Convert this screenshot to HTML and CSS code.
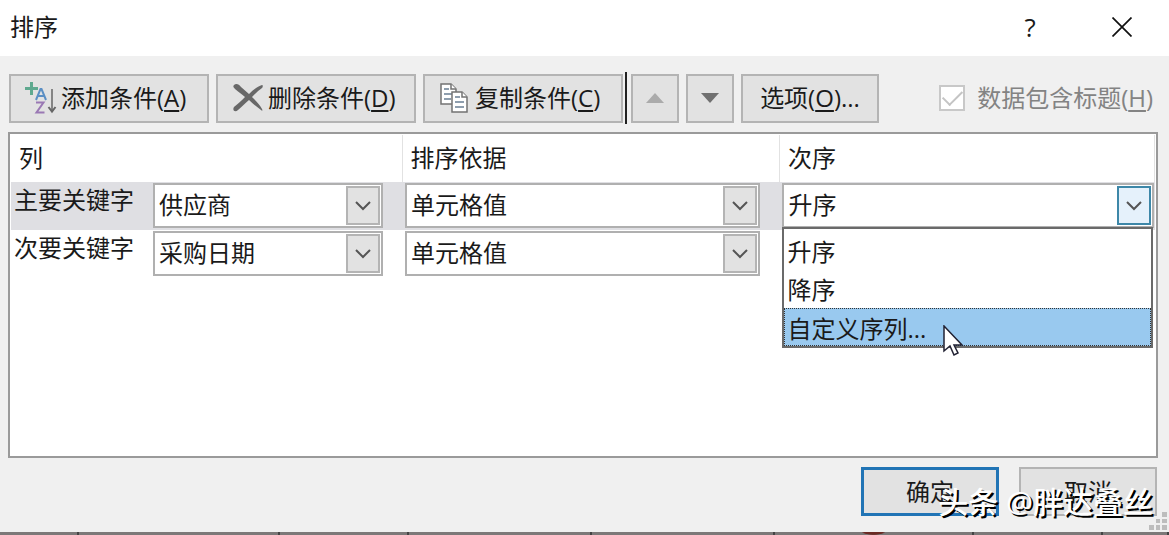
FILE: index.html
```
<!DOCTYPE html>
<html lang="zh-CN">
<head>
  <meta charset="UTF-8" />
  <meta name="viewport" content="width=device-width, initial-scale=1.0"/>
  <title>排序</title>
  <link rel="stylesheet" href="styles.css">
</head>
<body>

  <main class="dialog">
    <header class="titlebar">
      <h1>排序</h1>
      <button type="button" class="title-btn help" aria-label="帮助">?</button>
      <button type="button" class="title-btn" aria-label="关闭">
        <svg width="20" height="20" viewBox="0 0 20 20"><path d="M0.5 0.5L19.5 19.5M19.5 0.5L0.5 19.5" stroke="#111" stroke-width="1.700" fill="none"/></svg>
      </button>
    </header>

    <div class="toolbar">
      <button type="button" class="btn tool">
        <svg width="32" height="32" viewBox="0 0 32 32" fill="none">
          <path d="M6.500 0V13M0 6.500H13" stroke="#5fa98f" stroke-width="3"/>
          <path d="M11 18L15.500 7H16.500L21 18M12.500 14H19.500" stroke="#5b8fc4" stroke-width="2"/>
          <path d="M11 20.500H18.500L11.500 30.500H19.500" stroke="#9a78b4" stroke-width="2"/>
          <path d="M27 7V29" stroke="#666" stroke-width="1.500"/>
          <path d="M23.500 25L27 29.500L30.500 25" stroke="#666" stroke-width="2"/>
        </svg>
        <span>添加条件(<u>A</u>)</span>
      </button>
      <button type="button" class="btn tool">
        <svg width="32" height="32" viewBox="0 0 32 32">
          <path d="M2 3C4 1 7 2 9 5L17 12C21 8 26 4 30 3C31 3 31 5 30 6C27 8 23 12 20 15C24 19 28 23 30 27C31 29 30 29 29 28C25 25 21 22 17 18C13 21 10 25 6 28C3 31 0 28 2 25C6 22 10 18 13 15C10 12 6 10 3 7C1 5 1 4 2 3Z" fill="#686868"/>
        </svg>
        <span>删除条件(<u>D</u>)</span>
      </button>
      <button type="button" class="btn tool">
        <svg width="32" height="32" viewBox="0 0 32 32" fill="#fff" stroke="#737373" stroke-width="1.500">
          <path d="M2 2H12L17 7V22H2Z"/>
          <path d="M12 2V7H17" />
          <path d="M5 7H10M5 12H13M5 17H12" stroke="#6a7f94"/>
          <path d="M13 10H23L28 15V30H13Z"/>
          <path d="M23 10V15H28"/>
          <path d="M16 15H21M16 20H25M16 25H25" stroke="#6a7f94"/>
        </svg>
        <span>复制条件(<u>C</u>)</span>
      </button>
      <span class="separator"></span>
      <button type="button" class="btn arrow" aria-label="上移" disabled>
        <svg width="18" height="10" viewBox="0 0 18 10"><path d="M0 10L9 0L18 10Z" fill="#ababab"/></svg>
      </button>
      <button type="button" class="btn arrow" aria-label="下移">
        <svg width="18" height="10" viewBox="0 0 18 10"><path d="M0 0H18L9 10Z" fill="#707070"/></svg>
      </button>
      <button type="button" class="btn wide"><span>选项(<u>O</u>)...</span></button>
      <label class="has-header"><input type="checkbox" checked disabled> <span>数据包含标题(<u>H</u>)</span></label>
    </div>

    <section class="panel">
      <table>
        <colgroup><col class="col-key"><col class="col-by"><col></colgroup>
        <thead>
          <tr><th>列</th><th>排序依据</th><th>次序</th></tr>
        </thead>
        <tbody>
          <tr class="selected">
            <td>
              <div class="key">
                <label for="key1">主要关键字</label>
                <div class="combo">
                  <select id="key1"><option>供应商</option><option>采购日期</option></select>
                  <span class="drop"><svg width="16" height="10" viewBox="0 0 16 10"><path d="M1 1L8 8L15 1"/></svg></span>
                </div>
              </div>
            </td>
            <td>
              <div class="combo">
                <select aria-label="主要排序依据"><option>单元格值</option></select>
                <span class="drop"><svg width="16" height="10" viewBox="0 0 16 10"><path d="M1 1L8 8L15 1"/></svg></span>
              </div>
            </td>
            <td>
              <div class="combo open">
                <select aria-label="主要次序"><option>升序</option><option>降序</option></select>
                <span class="drop"><svg width="16" height="10" viewBox="0 0 16 10"><path d="M1 1L8 8L15 1"/></svg></span>
                <ul class="menu" role="listbox" aria-label="次序">
                  <li role="option">升序</li>
                  <li role="option">降序</li>
                  <li role="option" class="active" aria-selected="true">自定义序列...
                    <svg class="cursor" width="22" height="32" viewBox="0 0 22 32"><path d="M1 1V26L7 21L11 30L15 28L11 20H19Z" fill="#fff" stroke="#223" stroke-width="1.500"/></svg>
                  </li>
                </ul>
              </div>
            </td>
          </tr>
          <tr>
            <td>
              <div class="key">
                <label for="key2">次要关键字</label>
                <div class="combo">
                  <select id="key2"><option>采购日期</option><option>供应商</option></select>
                  <span class="drop"><svg width="16" height="10" viewBox="0 0 16 10"><path d="M1 1L8 8L15 1"/></svg></span>
                </div>
              </div>
            </td>
            <td>
              <div class="combo">
                <select aria-label="次要排序依据"><option>单元格值</option></select>
                <span class="drop"><svg width="16" height="10" viewBox="0 0 16 10"><path d="M1 1L8 8L15 1"/></svg></span>
              </div>
            </td>
            <td></td>
          </tr>
        </tbody>
      </table>
    </section>

    <footer class="actions">
      <button type="button" class="btn wide primary">确定</button>
      <button type="button" class="btn wide">取消</button>
      <span class="watermark">头条 @胖达叠丝</span>
      <svg class="grip" width="18" height="18" viewBox="0 0 18 18" fill="#bdbdbd">
        <path d="M13 0h5v5h-5zM7 7h4v4h-4zM13 7h5v4h-5zM0 13h5v5h-5zM7 13h4v5h-4zM13 13h5v5h-5z"/>
      </svg>
    </footer>
  </main>

  <!-- sheet behind the dialog -->
  <div class="sheet">
    <i></i><i></i><i></i><i></i><i></i><i class="mark"></i><i></i><i></i>
  </div>

</body>
</html>
```
FILE: styles.css
```
* { box-sizing: border-box; }
body {
  margin: 0;
  min-height: 100vh;
  display: flex;
  flex-direction: column;
  background: #f0f0f0;
  color: #1a1a1a;
  font-family: "Open Sans", "Noto Sans CJK SC", sans-serif;
  font-size: 24px;
  line-height: 32px;
}

button, select, input {
  font: inherit;
  color: inherit;
  margin: 0;
}

u {
  text-decoration-thickness: 2px;
  text-underline-offset: 3px;
}

.dialog {
  flex: 1;
  display: flex;
  flex-direction: column;
}

/* title bar */
.titlebar {
  display: flex;
  align-items: center;
  height: 56px;
  padding: 0 24px 3px 10px;
  background: #fff;
}

.titlebar h1 {
  flex: 1;
  margin: 0;
  font-size: 24px;
  font-weight: 400;
}

.title-btn {
  width: 46px;
  height: 46px;
  margin-left: 46px;
  padding: 0;
  border: none;
  background: none;
  display: flex;
  align-items: center;
  justify-content: center;
}

.help { font-size: 26px; }

/* toolbar */
.toolbar {
  display: flex;
  align-items: center;
  gap: 7px;
  height: 76px;
  padding: 8px 16px 0 9px;
}

.btn {
  display: flex;
  align-items: center;
  justify-content: center;
  height: 49px;
  padding: 0;
  background: #e2e2e2;
  border: 2px solid #b4b4b4;
  white-space: nowrap;
}

.tool {
  width: 200px;
  padding: 0 0 0 14px;
  justify-content: flex-start;
  gap: 4px;
}

.separator {
  width: 2px;
  height: 52px;
  margin: 0 -3px 0 -5px;
  background: #222;
}

.arrow { width: 48px; }
.wide { width: 138px; }

.has-header {
  display: flex;
  align-items: center;
  gap: 12px;
  margin-left: auto;
  color: #838383;
  white-space: nowrap;
}

.has-header input {
  appearance: none;
  width: 26px;
  height: 26px;
  border: 2px solid #c8c8c8;
  background: #fff;
  display: grid;
  place-items: center;
}

.has-header input:checked::before {
  content: "";
  width: 17px;
  height: 9px;
  border: solid #c4c4c4;
  border-width: 0 0 2px 2px;
  transform: translateY(-3px) rotate(-45deg);
}

/* level list */
.panel {
  flex: 1;
  margin: 0 11px 0 8px;
  padding: 1px 1px 0 1px;
  background: #fff;
  border: 2px solid #9a9a9a;
}

table {
  width: 100%;
  border-collapse: collapse;
  table-layout: fixed;
}

.col-key { width: 34.2%; }
.col-by { width: 33%; }

th {
  height: 47px;
  padding: 0 8px 2px;
  border-right: 1px solid #e2e2e2;
  font-weight: 400;
  text-align: left;
}

td {
  height: 48px;
  padding: 1px 19px 1px 3px;
  vertical-align: top;
}

td:last-child { padding-right: 1px; }
.selected { background: #dfdfe3; }

.key {
  display: flex;
  align-items: flex-start;
}

.key label {
  width: 139px;
  padding-top: 1px;
}

.combo {
  position: relative;
  flex: 1;
}

.combo select {
  display: block;
  width: 100%;
  height: 45px;
  padding: 0 40px 2px 4px;
  appearance: none;
  background: #fff;
  border: 2px solid #b0b0b0;
  border-radius: 0;
}

.drop {
  position: absolute;
  top: 3px;
  right: 3px;
  width: 34px;
  height: 39px;
  display: flex;
  align-items: center;
  justify-content: center;
  background: #e2e2e2;
  border: 2px solid #b4b4b4;
  pointer-events: none;
}

.drop path {
  fill: none;
  stroke: #555;
  stroke-width: 2;
}

.open .drop {
  background: #e5f1fb;
  border-color: #3d87a8;
}

.menu {
  position: absolute;
  top: 44px;
  left: 0;
  right: 1px;
  z-index: 1;
  margin: 0;
  padding: 3px 0 0;
  list-style: none;
  background: #fff;
  border: 2px solid #6a6a6a;
}

.menu li {
  height: 38px;
  padding: 4px 3px;
}

.menu .active {
  position: relative;
  background: #99c9ef;
  border: 1px dotted #333;
  padding: 4px 2px;
}

.cursor {
  position: absolute;
  left: 158px;
  top: 16px;
}

/* bottom buttons */
.actions {
  position: relative;
  display: flex;
  justify-content: flex-end;
  gap: 20px;
  height: 74px;
  padding: 9px 12px 0;
}

.primary {
  border: 3px solid #2174b5;
}

.watermark {
  position: absolute;
  right: 16px;
  bottom: 12px;
  color: #fff;
  font-size: 30px;
  line-height: 36px;
  font-weight: 500;
  text-shadow: 2px 2px 0 #000;
}

.grip {
  position: absolute;
  right: 2px;
  bottom: 2px;
}

.sheet {
  display: grid;
  grid-template-columns: 79fr 201fr 129fr 183fr 183fr 199fr 129fr 66fr;
  height: 3px;
  background: #7c7878;
}

.sheet i { border-right: 2px solid #444; }

.mark {
  background: radial-gradient(ellipse 12px 3px at 50% 0, #6b2a24 80%, transparent);
}
```
